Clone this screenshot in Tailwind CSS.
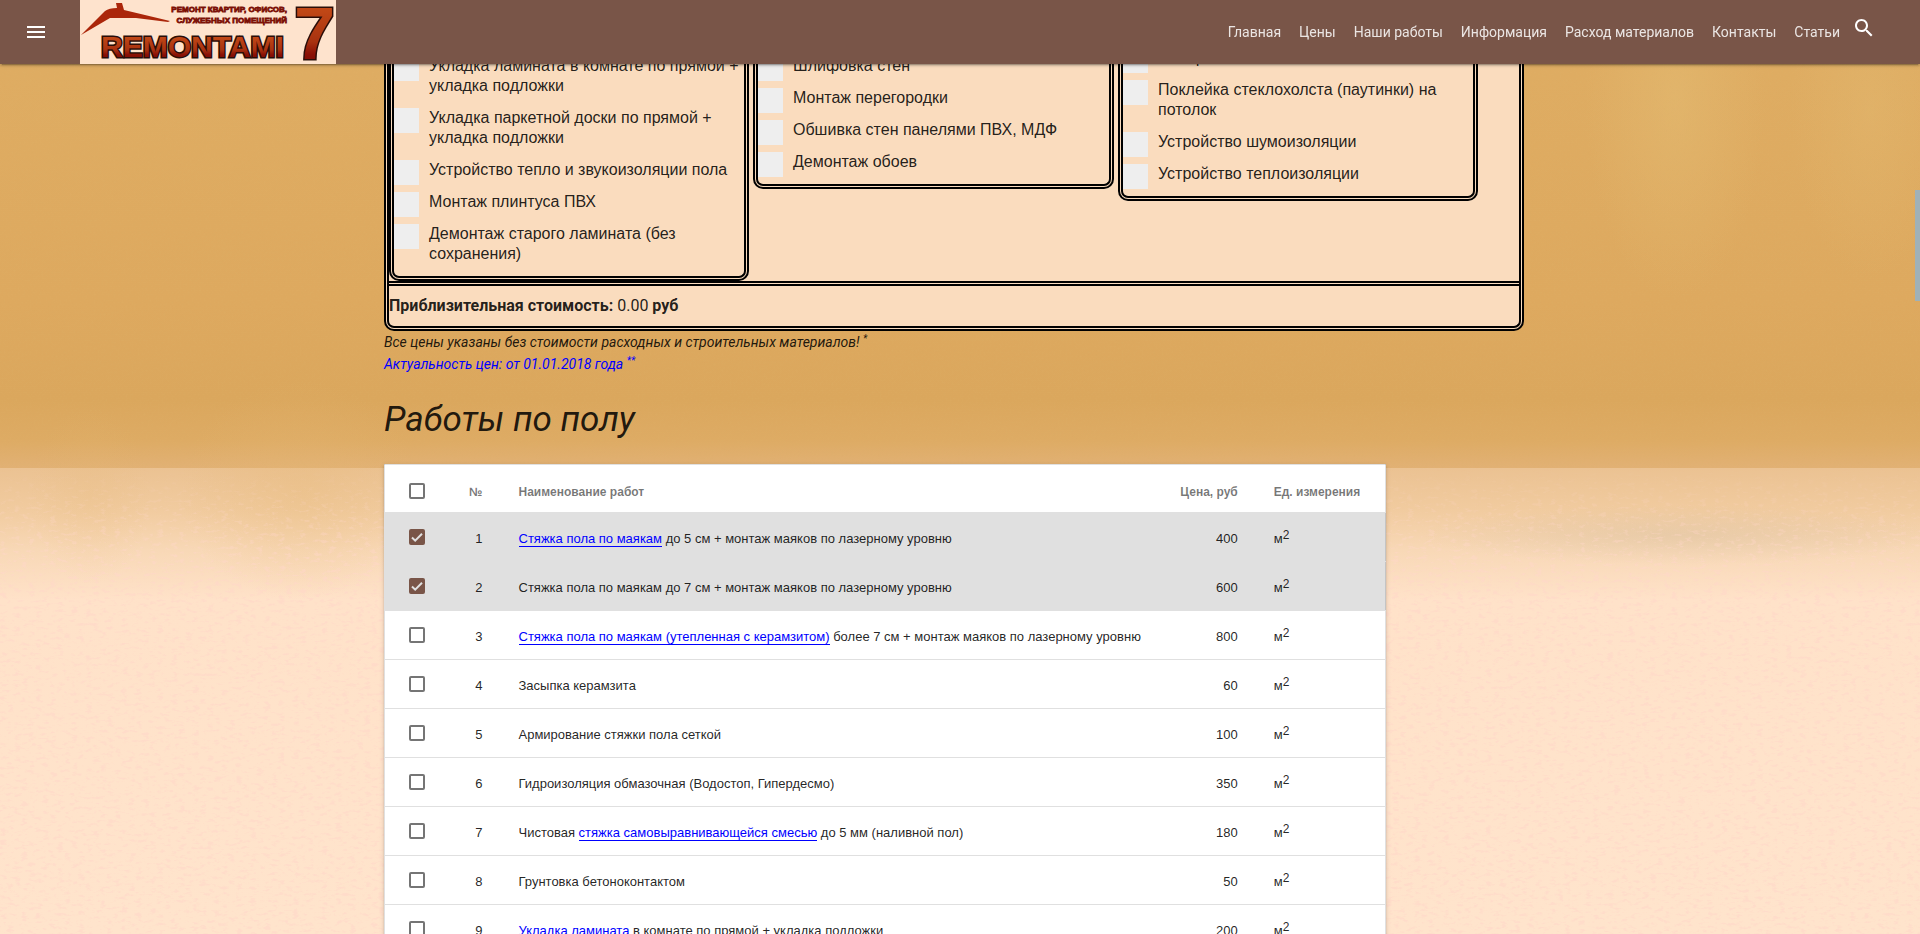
<!DOCTYPE html>
<html lang="ru">
<head>
<meta charset="utf-8">
<title>Remontami7 — Цены</title>
<script src="https://cdn.jsdelivr.net/npm/@tailwindcss/browser@4"></script>
</head>
<body class="bg-[#ffe4cc] font-['Liberation_Sans',Arial,sans-serif] text-black/87">
<div class="relative h-screen overflow-hidden">
  <!-- plaster texture -->
  <div class="absolute inset-0 bg-[linear-gradient(to_bottom,#dfad63_0px,#dea95f_300px,#dba75d_400px,#deab64_440px,#e2b175_468px,#ebc292_468px,#f1cb9f_510px,#f8d8b6_550px,#ffe2c9_600px,#ffe4cc_934px)]"></div>
  <div class="absolute inset-0 bg-[radial-gradient(ellipse_90px_200px_at_1675px_100px,#e4bb7290,transparent),radial-gradient(ellipse_80px_170px_at_1870px_110px,#e4bb7260,transparent),radial-gradient(ellipse_120px_110px_at_300px_490px,#e6b87550,transparent),radial-gradient(ellipse_60px_90px_at_90px_495px,#e6b87530,transparent),radial-gradient(ellipse_260px_30px_at_1680px_535px,#d8c0a070,transparent)]"></div>
  <svg class="absolute inset-0 h-full w-full" aria-hidden="true">
    <defs>
      <filter id="specks" x="0" y="0" width="100%" height="100%"><feTurbulence type="fractalNoise" baseFrequency="0.14 0.3" numOctaves="3" seed="4"/><feColorMatrix values="0 0 0 0 1  0 0 0 0 0.68  0 0 0 0 0.58  5 0 0 0 -2.7"/></filter>
      <filter id="grain" x="0" y="0" width="100%" height="100%"><feTurbulence type="fractalNoise" baseFrequency="0.5" numOctaves="2" seed="9"/><feColorMatrix values="0 0 0 0 0.7  0 0 0 0 0.45  0 0 0 0 0.15  0.7 0 0 0 -0.28"/></filter>
      <linearGradient id="fade" x1="0" y1="0" x2="0" y2="1"><stop offset="0.5" stop-color="#000"/><stop offset="0.62" stop-color="#fff"/></linearGradient>
      <mask id="low"><rect width="100%" height="100%" fill="url(#fade)"/></mask>
    </defs>
    <rect width="100%" height="468" filter="url(#grain)" opacity="0.5"/>
    <g mask="url(#low)"><rect width="100%" height="100%" filter="url(#specks)" opacity="0.6"/></g>
  </svg>

  <header class="fixed inset-x-0 top-0 z-20 flex h-16 items-center bg-[#795548] shadow-[0_2px_2px_0_rgba(0,0,0,0.14),0_3px_1px_-2px_rgba(0,0,0,0.2),0_1px_5px_0_rgba(0,0,0,0.12)]">
    <button type="button" aria-label="Меню" class="mx-6 h-6 w-6 text-white"><svg viewBox="0 0 24 24" class="h-6 w-6" fill="currentColor"><path d="M3 18h18v-2H3v2zm0-5h18v-2H3v2zm0-7v2h18V6H3z"/></svg></button>
    <a href="#" aria-label="Remontami 7" class="ml-2 block h-16 w-64 bg-[#fee3cd]">
      <svg viewBox="0 0 256 64" class="h-16 w-64">
        <defs>
          <linearGradient id="lg" x1="0" y1="0" x2="0" y2="1"><stop offset="0.1" stop-color="#c84e18"/><stop offset="0.6" stop-color="#a83210"/><stop offset="0.75" stop-color="#8a1005"/><stop offset="1" stop-color="#6e0a04"/></linearGradient>
        </defs>
        <path d="M1 35 L25 11 Q29 8 37 8 L36 3 H42 L44 10 L90 21 L88 22 L56 18 L30 18 Z" fill="#ab260a"/>
        <g font-family="'Liberation Sans',Arial,sans-serif" font-weight="700" fill="#7c1006" stroke="#7c1006" stroke-width="0.8" font-size="8" text-anchor="end">
          <text x="207" y="12">РЕМОНТ КВАРТИР, ОФИСОВ,</text>
          <text x="207" y="23">СЛУЖЕБНЫХ ПОМЕЩЕНИЙ</text>
        </g>
        <g font-family="'Liberation Sans',Arial,sans-serif" font-weight="700" fill="url(#lg)" stroke="#2a0d08" stroke-width="3" paint-order="stroke">
          <text x="21" y="57" font-size="30">REMONTAMI</text>
          <text x="214" y="59" font-size="74">7</text>
        </g>
      </svg>
    </a>
    <nav class="ml-auto flex items-center gap-[18px] font-[Roboto,sans-serif] text-sm text-white/85">
      <a href="#">Главная</a><a href="#">Цены</a><a href="#">Наши работы</a><a href="#">Информация</a><a href="#">Расход материалов</a><a href="#">Контакты</a><a href="#">Статьи</a>
    </nav>
    <button type="button" aria-label="Поиск" class="mr-11 mb-2 ml-3 h-6 w-6 text-white"><svg viewBox="0 0 24 24" class="h-6 w-6" fill="currentColor"><path d="M15.5 14h-.79l-.28-.27C15.41 12.59 16 11.11 16 9.5 16 5.91 13.09 3 9.5 3S3 5.91 3 9.5 5.91 16 9.5 16c1.61 0 3.09-.59 4.23-1.57l.27.28v.79l5 4.99L20.49 19l-4.99-5zm-6 0C7.01 14 5 11.99 5 9.5S7.01 5 9.5 5 14 7.01 14 9.5 11.99 14 9.5 14z"/></svg></button>
  </header>

  <main class="relative mx-auto w-[60%]">
    <form class="mr-3 rounded-b-[10px] border-x-[5px] border-b-[5px] border-double border-black bg-[#fadcbe] text-base leading-5">
      <div class="flex items-start gap-1 border-b-[5px] border-double border-black">
        <fieldset class="flex w-[360px] flex-col gap-3 rounded-b-[10px] border-x-[5px] border-b-[5px] border-double border-black pt-14 pb-3">
          <label class="flex items-start gap-[10px]"><input type="checkbox" class="-mb-2 h-[25px] w-[25px] shrink-0 appearance-none bg-[#eee]"><span>Укладка ламината в комнате по прямой + укладка подложки</span></label>
          <label class="flex items-start gap-[10px]"><input type="checkbox" class="-mb-2 h-[25px] w-[25px] shrink-0 appearance-none bg-[#eee]"><span>Укладка паркетной доски по прямой + укладка подложки</span></label>
          <label class="flex items-start gap-[10px]"><input type="checkbox" class="-mb-2 h-[25px] w-[25px] shrink-0 appearance-none bg-[#eee]"><span>Устройство тепло и звукоизоляции пола</span></label>
          <label class="flex items-start gap-[10px]"><input type="checkbox" class="-mb-2 h-[25px] w-[25px] shrink-0 appearance-none bg-[#eee]"><span>Монтаж плинтуса ПВХ</span></label>
          <label class="flex items-start gap-[10px]"><input type="checkbox" class="-mb-2 h-[25px] w-[25px] shrink-0 appearance-none bg-[#eee]"><span>Демонтаж старого ламината (без сохранения)</span></label>
        </fieldset>
        <fieldset class="flex w-[361px] flex-col gap-3 rounded-b-[10px] border-x-[5px] border-b-[5px] border-double border-black pt-14 pb-3">
          <label class="flex items-start gap-[10px]"><input type="checkbox" class="-mb-2 h-[25px] w-[25px] shrink-0 appearance-none bg-[#eee]"><span>Шлифовка стен</span></label>
          <label class="flex items-start gap-[10px]"><input type="checkbox" class="-mb-2 h-[25px] w-[25px] shrink-0 appearance-none bg-[#eee]"><span>Монтаж перегородки</span></label>
          <label class="flex items-start gap-[10px]"><input type="checkbox" class="-mb-2 h-[25px] w-[25px] shrink-0 appearance-none bg-[#eee]"><span>Обшивка стен панелями ПВХ, МДФ</span></label>
          <label class="flex items-start gap-[10px]"><input type="checkbox" class="-mb-2 h-[25px] w-[25px] shrink-0 appearance-none bg-[#eee]"><span>Демонтаж обоев</span></label>
        </fieldset>
        <fieldset class="flex w-[360px] flex-col gap-3 rounded-b-[10px] border-x-[5px] border-b-[5px] border-double border-black pt-12 pb-3">
          <label class="flex items-start gap-[10px]"><input type="checkbox" class="-mb-2 h-[25px] w-[25px] shrink-0 appearance-none bg-[#eee]"><span>Шлифовка потолка</span></label>
          <label class="flex items-start gap-[10px]"><input type="checkbox" class="-mb-2 h-[25px] w-[25px] shrink-0 appearance-none bg-[#eee]"><span>Поклейка стеклохолста (паутинки) на потолок</span></label>
          <label class="flex items-start gap-[10px]"><input type="checkbox" class="-mb-2 h-[25px] w-[25px] shrink-0 appearance-none bg-[#eee]"><span>Устройство шумоизоляции</span></label>
          <label class="flex items-start gap-[10px]"><input type="checkbox" class="-mb-2 h-[25px] w-[25px] shrink-0 appearance-none bg-[#eee]"><span>Устройство теплоизоляции</span></label>
        </fieldset>
      </div>
      <p class="py-[10px] font-[Roboto,sans-serif]"><b>Приблизительная стоимость:</b> <output>0.00</output> <b>руб</b></p>
    </form>
    <p class="font-[Roboto,sans-serif] text-sm leading-[22px] italic">Все цены указаны без стоимости расходных и строительных материалов! <sup class="text-[10px]">*</sup></p>
    <p class="font-[Roboto,sans-serif] text-sm leading-[22px] text-[#0000ff] italic">Актуальность цен: от 01.01.2018 года <sup class="text-[10px]">**</sup></p>
    <h2 class="mt-[25px] mb-6 font-[Roboto,sans-serif] text-[35px] leading-10 italic">Работы по полу</h2>
    <table class="w-[87%] table-fixed border-collapse border border-black/12 bg-white text-[13px] shadow-[0_2px_2px_0_rgba(0,0,0,0.14),0_3px_1px_-2px_rgba(0,0,0,0.2),0_1px_5px_0_rgba(0,0,0,0.12)]">
      <colgroup><col class="w-[64px]"><col class="w-[52px]"><col><col class="w-[100px]"><col class="w-[130px]"></colgroup>
      <thead>
        <tr class="h-12 text-xs text-black/54">
          <th class="pt-1 pl-6 text-left"><input type="checkbox" aria-label="Выбрать все" class="block h-4 w-4 appearance-none rounded-xs border-2 border-[#757575]"></th>
          <th class="pt-[6px] pr-[18px] text-right">№</th>
          <th class="pt-[6px] pl-[18px] text-left">Наименование работ</th>
          <th class="pt-[6px] pr-[18px] text-right">Цена, руб</th>
          <th class="pt-[6px] pl-[18px] text-left">Ед. измерения</th>
        </tr>
      </thead>
      <tbody id="rows"></tbody>
    </table>
  </main>
  <div class="absolute top-[190px] right-0 h-[111px] w-[5px] bg-[#9fb1b8]"></div>
</div>
<script>
const rows = [
  ['<a href="#" class="text-[#0000ff] border-b border-[#0000ff]">Стяжка пола по маякам</a> до 5 см + монтаж маяков по лазерному уровню', 400, true],
  ['Стяжка пола по маякам до 7 см + монтаж маяков по лазерному уровню', 600, true],
  ['<a href="#" class="text-[#0000ff] border-b border-[#0000ff]">Стяжка пола по маякам (утепленная с керамзитом)</a> более 7 см + монтаж маяков по лазерному уровню', 800, false],
  ['Засыпка керамзита', 60, false],
  ['Армирование стяжки пола сеткой', 100, false],
  ['Гидроизоляция обмазочная (Водостоп, Гипердесмо)', 350, false],
  ['Чистовая <a href="#" class="text-[#0000ff] border-b border-[#0000ff]">стяжка самовыравнивающейся смесью</a> до 5 мм (наливной пол)', 180, false],
  ['Грунтовка бетоноконтактом', 50, false],
  ['<a href="#" class="text-[#0000ff] border-b border-[#0000ff]">Укладка ламината</a> в комнате по прямой + укладка подложки', 200, false],
];
document.getElementById('rows').innerHTML = rows.map(([name, price, on], i) => `
  <tr class="h-[49px] border-t border-[#e0e0e0] ${on ? 'bg-[#e0e0e0]' : ''}">
    <td class="pl-6"><span class="relative block h-4 w-4"><input type="checkbox" aria-label="Строка ${i + 1}" ${on ? 'checked' : ''} class="block h-4 w-4 appearance-none rounded-xs border-2 border-[#757575] checked:border-[#795548] checked:bg-[#795548]">${on ? '<svg viewBox="0 0 16 16" class="pointer-events-none absolute inset-0 h-4 w-4" fill="none" stroke="#e0e0e0" stroke-width="2"><path d="M3 8.5l3.2 3.2L13 4.8"/></svg>' : ''}</span></td>
    <td class="pt-[3px] pr-[18px] text-right">${i + 1}</td>
    <td class="pt-[3px] pl-[18px] whitespace-nowrap">${name}</td>
    <td class="pt-[3px] pr-[18px] text-right">${price}</td>
    <td class="pt-[3px] pl-[18px]">м<sup class="-top-1 text-xs leading-none">2</sup></td>
  </tr>`).join('');
</script>
</body>
</html>
